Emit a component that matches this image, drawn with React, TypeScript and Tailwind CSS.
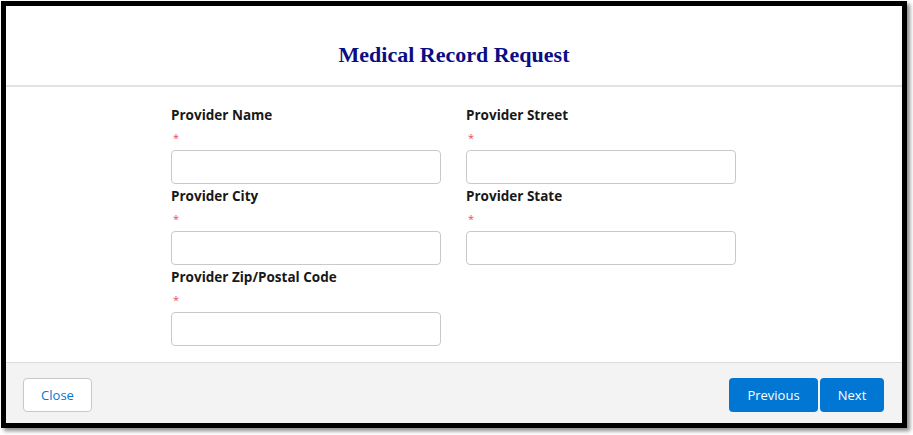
import React from "react";

const sans = { fontFamily: '"Open Sans", "Noto Sans", sans-serif' };

function Field({ label }: { label: string }) {
  return (
    <div className="flex flex-col">
      <div className="h-[20px] text-[13.5px] leading-[20px] font-bold text-[#181818]">{label}</div>
      <div className="h-[25px] pl-[2px] pt-[7px] text-[11px] leading-[12px] text-[#ea4a5e]">*</div>
      <div className="h-[34px] rounded-[4px] border border-[#c9c9c9] bg-white" />
    </div>
  );
}

export default function App() {
  return (
    <div className="w-[913px] h-[435px] bg-white overflow-hidden" style={sans}>
      <div className="ml-[1px] mt-[1px] w-[906px] h-[427px] border-[5px] border-black bg-white flex flex-col shadow-[3px_3px_4px_rgba(0,0,0,0.45)]">
        <div className="h-[79px] shrink-0 pt-[35px] text-center">
          <h1
            className="text-[22px] leading-[28px] font-bold text-[#0c0c86]"
            style={{ fontFamily: '"Liberation Serif", "DejaVu Serif", serif' }}
          >
            Medical Record Request
          </h1>
        </div>
        <div className="h-[2px] shrink-0 bg-[#e2e2e2]" />
        <div className="h-[275px] shrink-0 pt-[18px] pl-[165px] flex justify-start">
          <div className="w-[565px] grid grid-cols-[270px_270px] gap-x-[25px] gap-y-[2px] content-start">
            <Field label="Provider Name" />
            <Field label="Provider Street" />
            <Field label="Provider City" />
            <Field label="Provider State" />
            <Field label="Provider Zip/Postal Code" />
          </div>
        </div>
        <div className="flex-1 border-t border-[#dddbda] bg-[#f3f3f3] pl-[17px] pr-[18px] pt-[15px] flex items-start justify-between">
          <button className="w-[69px] h-[34px] pt-[2px] rounded-[4px] border border-[#c9c9c9] bg-white text-[13px] text-[#0176d3]">
            Close
          </button>
          <div className="flex gap-[2px]">
            <button className="w-[89px] h-[34px] pt-[2px] rounded-[4px] bg-[#0176d3] text-[13px] text-white">
              Previous
            </button>
            <button className="w-[64px] h-[34px] pt-[2px] rounded-[4px] bg-[#0176d3] text-[13px] text-white">
              Next
            </button>
          </div>
        </div>
      </div>
    </div>
  );
}
